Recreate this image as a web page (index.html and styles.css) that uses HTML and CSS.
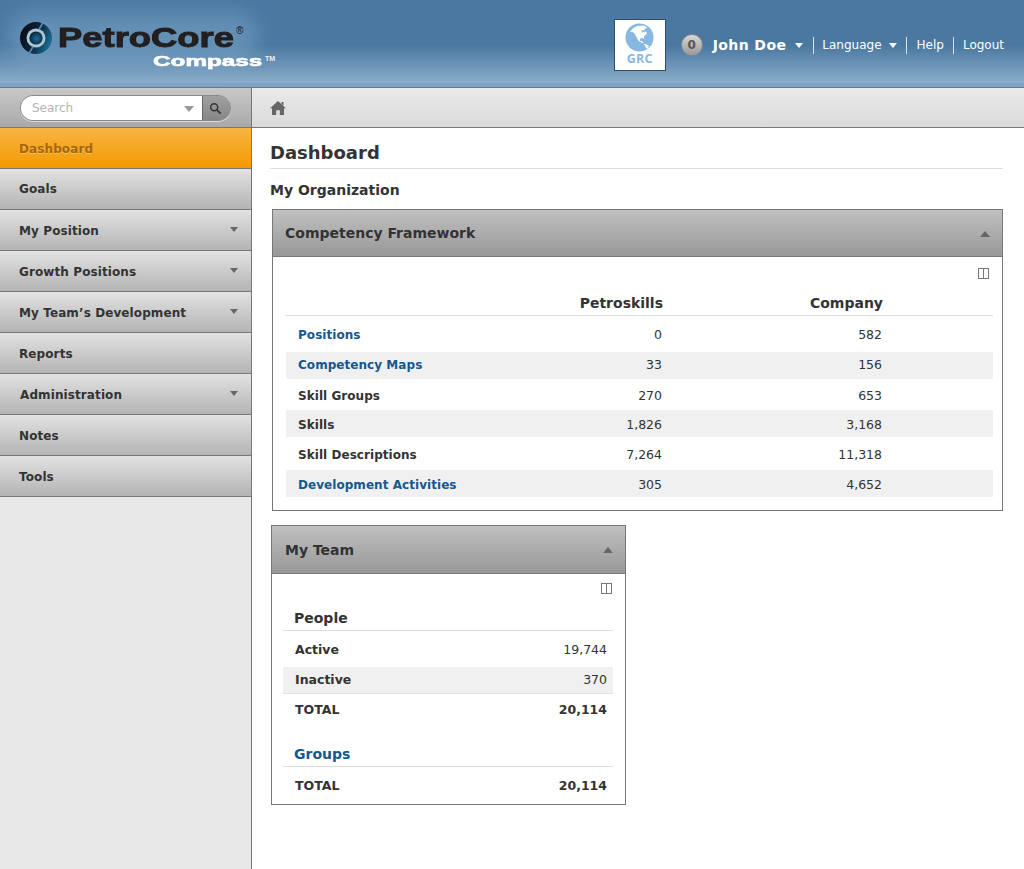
FILE: index.html
```html
<!DOCTYPE html>
<html lang="en">
<head>
<meta charset="utf-8">
<title>PetroCore Compass</title>
<link rel="stylesheet" href="styles.css">
</head>
<body>
<header class="header">
  <div class="logo">
    <div class="logo-glow"></div>
    <svg class="logo-mark" viewBox="0 0 34 34" width="34" height="34">
      <defs>
        <linearGradient id="ring" x1="0" y1="0.2" x2="1" y2="0.6">
          <stop offset="0" stop-color="#080a14"/>
          <stop offset="0.5" stop-color="#0e2238"/>
          <stop offset="1" stop-color="#1a7099"/>
        </linearGradient>
        <radialGradient id="core" cx="0.55" cy="0.55" r="0.6">
          <stop offset="0" stop-color="#1d6f9c"/>
          <stop offset="1" stop-color="#0a1c30"/>
        </radialGradient>
      </defs>
      <circle cx="17" cy="17" r="16" fill="url(#ring)"/>
      <circle cx="17" cy="17" r="9.5" fill="#a9c7d8"/>
      <circle cx="17" cy="17" r="6.6" fill="url(#core)"/>
      <path d="M24.5 0.5 L20 8.5 M9.5 33.5 L14 25.5" stroke="#5b8cb0" stroke-width="1.6"/>
    </svg>
    <div class="logo-name">PetroCore</div>
    <div class="logo-reg">®</div>
    <div class="logo-sub">Compass</div>
    <div class="logo-tm">TM</div>
  </div>
  <div class="header-right">
    <div class="grc">
      <svg viewBox="0 0 30 30" width="29" height="29">
        <circle cx="15" cy="15" r="14.5" fill="#86b8e2"/>
        <path d="M5 9 L9 5 L13 3 L19 2.5 L23 4.5 L21 6 L19 8 L17 7 L18 10 L21 8.5 L23 10 L22 12 L19.5 14 L20 17 L18.5 15.5 L15.5 16 L15.5 18.5 L18 19 L19.5 21 L17.5 20.5 L14 18.5 L12 15 L10 11 L7.5 9 Z" fill="#fff"/>
        <path d="M19.5 21.5 L22 22 L25 24 L23 27 L21.5 25 Z" fill="#fff"/>
      </svg>
      <span class="grc-label">GRC</span>
    </div>
    <div class="badge">0</div>
    <a class="user">John Doe<span class="caret-white"></span></a>
    <a class="toplink">Language<span class="caret-white small"></span></a>
    <a class="toplink help">Help</a>
    <a class="toplink last">Logout</a>
  </div>
</header>

<div class="layout">
  <aside class="sidebar">
    <div class="searchbar">
      <div class="search">
        <div class="search-input"><span>Search</span><i class="search-caret"></i></div>
        <div class="search-btn">
          <svg viewBox="0 0 14 14" width="13" height="13"><circle cx="5.6" cy="5.6" r="3.8" fill="none" stroke="#333" stroke-width="1.6"/><path d="M8.5 8.5 L12.5 12.5" stroke="#333" stroke-width="2"/></svg>
        </div>
      </div>
    </div>
    <nav class="menu">
      <a class="item active">Dashboard</a>
      <a class="item goals">Goals</a>
      <a class="item">My Position<i class="item-caret"></i></a>
      <a class="item">Growth Positions<i class="item-caret"></i></a>
      <a class="item">My Team’s Development<i class="item-caret"></i></a>
      <a class="item">Reports</a>
      <a class="item admin">Administration<i class="item-caret"></i></a>
      <a class="item">Notes</a>
      <a class="item">Tools</a>
    </nav>
  </aside>

  <main class="main">
    <div class="crumbs">
      <svg viewBox="0 0 16 14" width="16" height="14"><path d="M8 0 L16 7.2 L14 7.2 L14 14 L9.8 14 L9.8 9.2 L6.2 9.2 L6.2 14 L2 14 L2 7.2 L0 7.2 Z M11.5 1 L13.5 1 L13.5 4.5 L11.5 2.8 Z" fill="#666"/></svg>
    </div>
    <div class="content">
      <h1 class="title">Dashboard</h1>
      <h2 class="subtitle">My Organization</h2>

      <section class="panel panel-wide">
        <div class="panel-head"><span>Competency Framework</span><i class="up"></i></div>
        <div class="panel-body">
          <div class="tool-row"><i class="columns"></i></div>
          <table class="grid">
            <thead><tr><th></th><th>Petroskills</th><th>Company</th></tr></thead>
            <tbody>
              <tr><td class="link">Positions</td><td>0</td><td>582</td></tr>
              <tr class="alt"><td class="link">Competency Maps</td><td>33</td><td>156</td></tr>
              <tr><td class="label">Skill Groups</td><td>270</td><td>653</td></tr>
              <tr class="alt"><td class="label">Skills</td><td>1,826</td><td>3,168</td></tr>
              <tr><td class="label">Skill Descriptions</td><td>7,264</td><td>11,318</td></tr>
              <tr class="alt"><td class="link">Development Activities</td><td>305</td><td>4,652</td></tr>
            </tbody>
          </table>
        </div>
      </section>

      <section class="panel panel-team">
        <div class="panel-head"><span>My Team</span><i class="up"></i></div>
        <div class="panel-body team-body">
          <div class="tool-row"><i class="columns"></i></div>
          <h3 class="group">People</h3>
          <div class="row first"><b>Active</b><span>19,744</span></div>
          <div class="row alt"><b>Inactive</b><span>370</span></div>
          <div class="row"><b>TOTAL</b><b>20,114</b></div>
          <h3 class="group blue">Groups</h3>
          <div class="row first"><b>TOTAL</b><b>20,114</b></div>
        </div>
      </section>
    </div>
  </main>
</div>
</body>
</html>
```
FILE: styles.css
```css
* { box-sizing: border-box; }
html, body { margin: 0; padding: 0; height: 100%; }
body {
  font-family: "DejaVu Sans", Verdana, sans-serif;
  font-size: 13px;
  color: #333;
  background: #fff;
  overflow: hidden;
}
.header {
  height: 88px;
  display: flex;
  justify-content: space-between;
  background: linear-gradient(to bottom, #4a78a1 0, #4a78a1 45px, #8badca 83px, #7ca4c6 83px, #7ca4c6 87px);
  border-bottom: 1px solid #777;
}
.logo { position: relative; width: 300px; }
.logo-glow {
  position: absolute; left: 8px; top: 12px; width: 250px; height: 50px;
  background: rgba(150, 190, 220, .35);
  border-radius: 30px;
  filter: blur(10px);
}
.logo-mark { position: absolute; left: 19px; top: 21px; }
.logo-name {
  position: absolute; left: 58px; top: 21px;
  font: bold 28px/34px "Liberation Sans", Arial, sans-serif;
  color: #231f20;
  transform-origin: 0 0;
  transform: scaleX(1.3);
  -webkit-text-stroke: 1px #231f20;
}
.logo-reg { position: absolute; left: 236px; top: 25px; font: 10px/12px "Liberation Sans", sans-serif; color: #111; }
.logo-sub {
  position: absolute; left: 153px; top: 52px;
  font: bold 15px/17px "Liberation Sans", Arial, sans-serif;
  color: #fff;
  transform-origin: 0 0;
  transform: scaleX(1.62);
  -webkit-text-stroke: .6px #fff;
}
.logo-tm { position: absolute; left: 265px; top: 55px; font: bold 7px/8px "Liberation Sans", sans-serif; color: #eee; }
.header-right { display: flex; align-items: center; padding-right: 20px; height: 87px; padding-top: 3px; }
.grc {
  width: 52px; height: 52px;
  margin-right: 15px;
  background: #fff;
  border: 1px solid #2c4f70;
  display: flex; flex-direction: column; align-items: center;
  padding-top: 3px;
}
.grc-label { font: bold 12.5px/14px "Open Sans", "DejaVu Sans", sans-serif; color: #86b8e2; letter-spacing: .3px; }
.badge {
  width: 22px; height: 22px; border-radius: 50%;
  background: linear-gradient(#d8d8d8, #999);
  border: 1px solid #8a8a8a;
  color: #555;
  font: bold 12px/20px "DejaVu Sans", sans-serif;
  text-align: center;
  margin-right: 10px;
}
.user { font-weight: bold; font-size: 14px; letter-spacing: .4px; color: #fff; padding-right: 10px; display: flex; align-items: center; }
.toplink {
  display: flex; align-items: center;
  height: 17px;
  color: #fff;
  font-size: 12px;
  border-left: 1px solid #d8e4ee;
  padding: 0 9px 0 8px;
}
.toplink.help { padding-left: 10px; }
.toplink.last { padding: 0 0 0 9px; }
.caret-white {
  width: 0; height: 0; margin-left: 9px; margin-top: 1px;
  border-left: 4px solid transparent; border-right: 4px solid transparent; border-top: 5px solid #fff;
}
.caret-white.small { margin-left: 7px; }

.layout { display: flex; height: calc(100% - 88px); }
.sidebar { width: 252px; flex: none; background: #e8e8e8; border-right: 1px solid #777; }
.searchbar {
  height: 40px;
  background: linear-gradient(#c8c8c8, #a9a9a9);
  border-bottom: 1px solid #777;
  padding: 7px 0 0 20px;
}
.search {
  display: flex; width: 211px; height: 26px;
  border: 1px solid #888; border-radius: 13px; overflow: hidden;
  box-shadow: 0 1px 0 #ddd;
}
.search-input {
  flex: 1; background: #fff; display: flex; align-items: center; justify-content: space-between;
  padding: 0 8px 0 11px; color: #b5b5b5; font-size: 12px;
}
.search-caret { width: 0; height: 0; border-left: 5px solid transparent; border-right: 5px solid transparent; border-top: 6px solid #999; margin-top: 2px; }
.search-btn { width: 28px; background: linear-gradient(#a0a0a0, #868686); border-left: 1px solid #666; display: flex; align-items: center; justify-content: center; padding-right: 3px; }
.item {
  display: flex; align-items: center; justify-content: space-between;
  height: 41px;
  padding: 2px 13px 0 19px;
  background: linear-gradient(#e2e2e2, #b4b4b4);
  border-bottom: 1px solid #777;
  font-weight: bold; font-size: 12px; letter-spacing: .1px; color: #333;
}
.item.goals { padding-bottom: 2px; }
.item.admin { padding-left: 20px; }
.item.active {
  background: linear-gradient(#f8b445, #f39a00);
  color: #a5660a;
  text-shadow: 0 1px 0 rgba(255,255,255,.3);
}
.item-caret { width: 0; height: 0; border-left: 4.5px solid transparent; border-right: 4.5px solid transparent; border-top: 5px solid #666; margin-top: -3px; }

.main { flex: 1; min-width: 0; }
.crumbs {
  height: 40px;
  background: linear-gradient(#eaeaea, #dadada);
  border-bottom: 1px solid #777;
  display: flex; align-items: center;
  padding-left: 18px;
}
.content { padding: 13px 21px 0 18px; }
.title {
  margin: 0; font-size: 18px; line-height: 24px; font-weight: bold; color: #333;
  padding-bottom: 3px; border-bottom: 1px solid #ddd;
}
.subtitle { margin: 12px 0 9px; font-size: 14px; line-height: 19px; font-weight: bold; color: #333; }
.panel { border: 1px solid #777; background: #fff; }
.panel-wide { margin-left: 2px; }
.panel-team { width: 355px; margin: 14px 0 0 1px; }
.panel-head {
  height: 47px;
  display: flex; align-items: center; justify-content: space-between;
  padding: 0 12px;
  background: linear-gradient(#c0c0c0, #989898);
  border-bottom: 1px solid #777;
  font-weight: bold; font-size: 14px; color: #333;
}
.panel-team .panel-head { height: 48px; padding-left: 13px; }
.up { width: 0; height: 0; border-left: 5px solid transparent; border-right: 5px solid transparent; border-bottom: 6px solid #666; margin-top: 1px; }
.panel-body { padding: 11px 9px 13px 12px; }
.tool-row { display: flex; justify-content: flex-end; height: 12px; }
.columns {
  display: block; width: 11px; height: 11px; border: 1px solid #777; margin-right: 4px;
  background: linear-gradient(to right, transparent 4px, #777 4px, #777 5px, transparent 5px);
}
.grid { width: 100%; table-layout: fixed; border-collapse: separate; border-spacing: 0; margin-top: 4px; }
.grid th {
  text-align: right; font-size: 14px; line-height: 20px; height: 32px; vertical-align: bottom; padding: 0 0 2px;
  border-bottom: 1px solid #ddd; color: #333;
}
.grid th:nth-child(2) { width: 150px; }
.grid th:nth-child(3) { width: 330px; padding-right: 110px; }
.grid td { height: 30px; padding: 0 0 2px; text-align: right; font-size: 12.5px; border-top: 3px solid #fff; }
.grid tbody tr:first-child td { height: 33px; border-top-width: 6px; }
.grid tbody tr:nth-child(n+3) td { padding-top: 2px; padding-bottom: 0; }
.grid tbody tr:nth-child(3) td { height: 28px; }
.grid td:nth-child(2) { padding-right: 1px; }
.grid td:nth-child(3) { padding-right: 111px; }
.grid td:first-child { text-align: left; padding-left: 12px; font-size: 12px; font-weight: bold; letter-spacing: .05px; border-left: 1px solid #fff; }
.grid .alt td { background: #f0f0f0; background-clip: padding-box; }
.grid td.link { color: #13588f; }
.grid td.label { color: #333; }
.team-body { padding: 9px 12px 4px 11px; }
.team-body .tool-row .columns { margin-right: 1px; }
.group { margin: 11px 0 0; height: 25px; border-bottom: 1px solid #ddd; padding-left: 11px; font-size: 14px; line-height: 24px; font-weight: bold; color: #333; }
.group.blue { color: #13588f; margin-top: 18px; }
.row {
  display: flex; justify-content: space-between; align-items: center;
  height: 27px; margin-top: 3px; padding: 0 6px 2px 12px; font-size: 12.5px;
}
.row.first { margin-top: 6px; }
.row.alt { background: #f0f0f0; border-bottom: 1px solid #e0e0e0; }
```
